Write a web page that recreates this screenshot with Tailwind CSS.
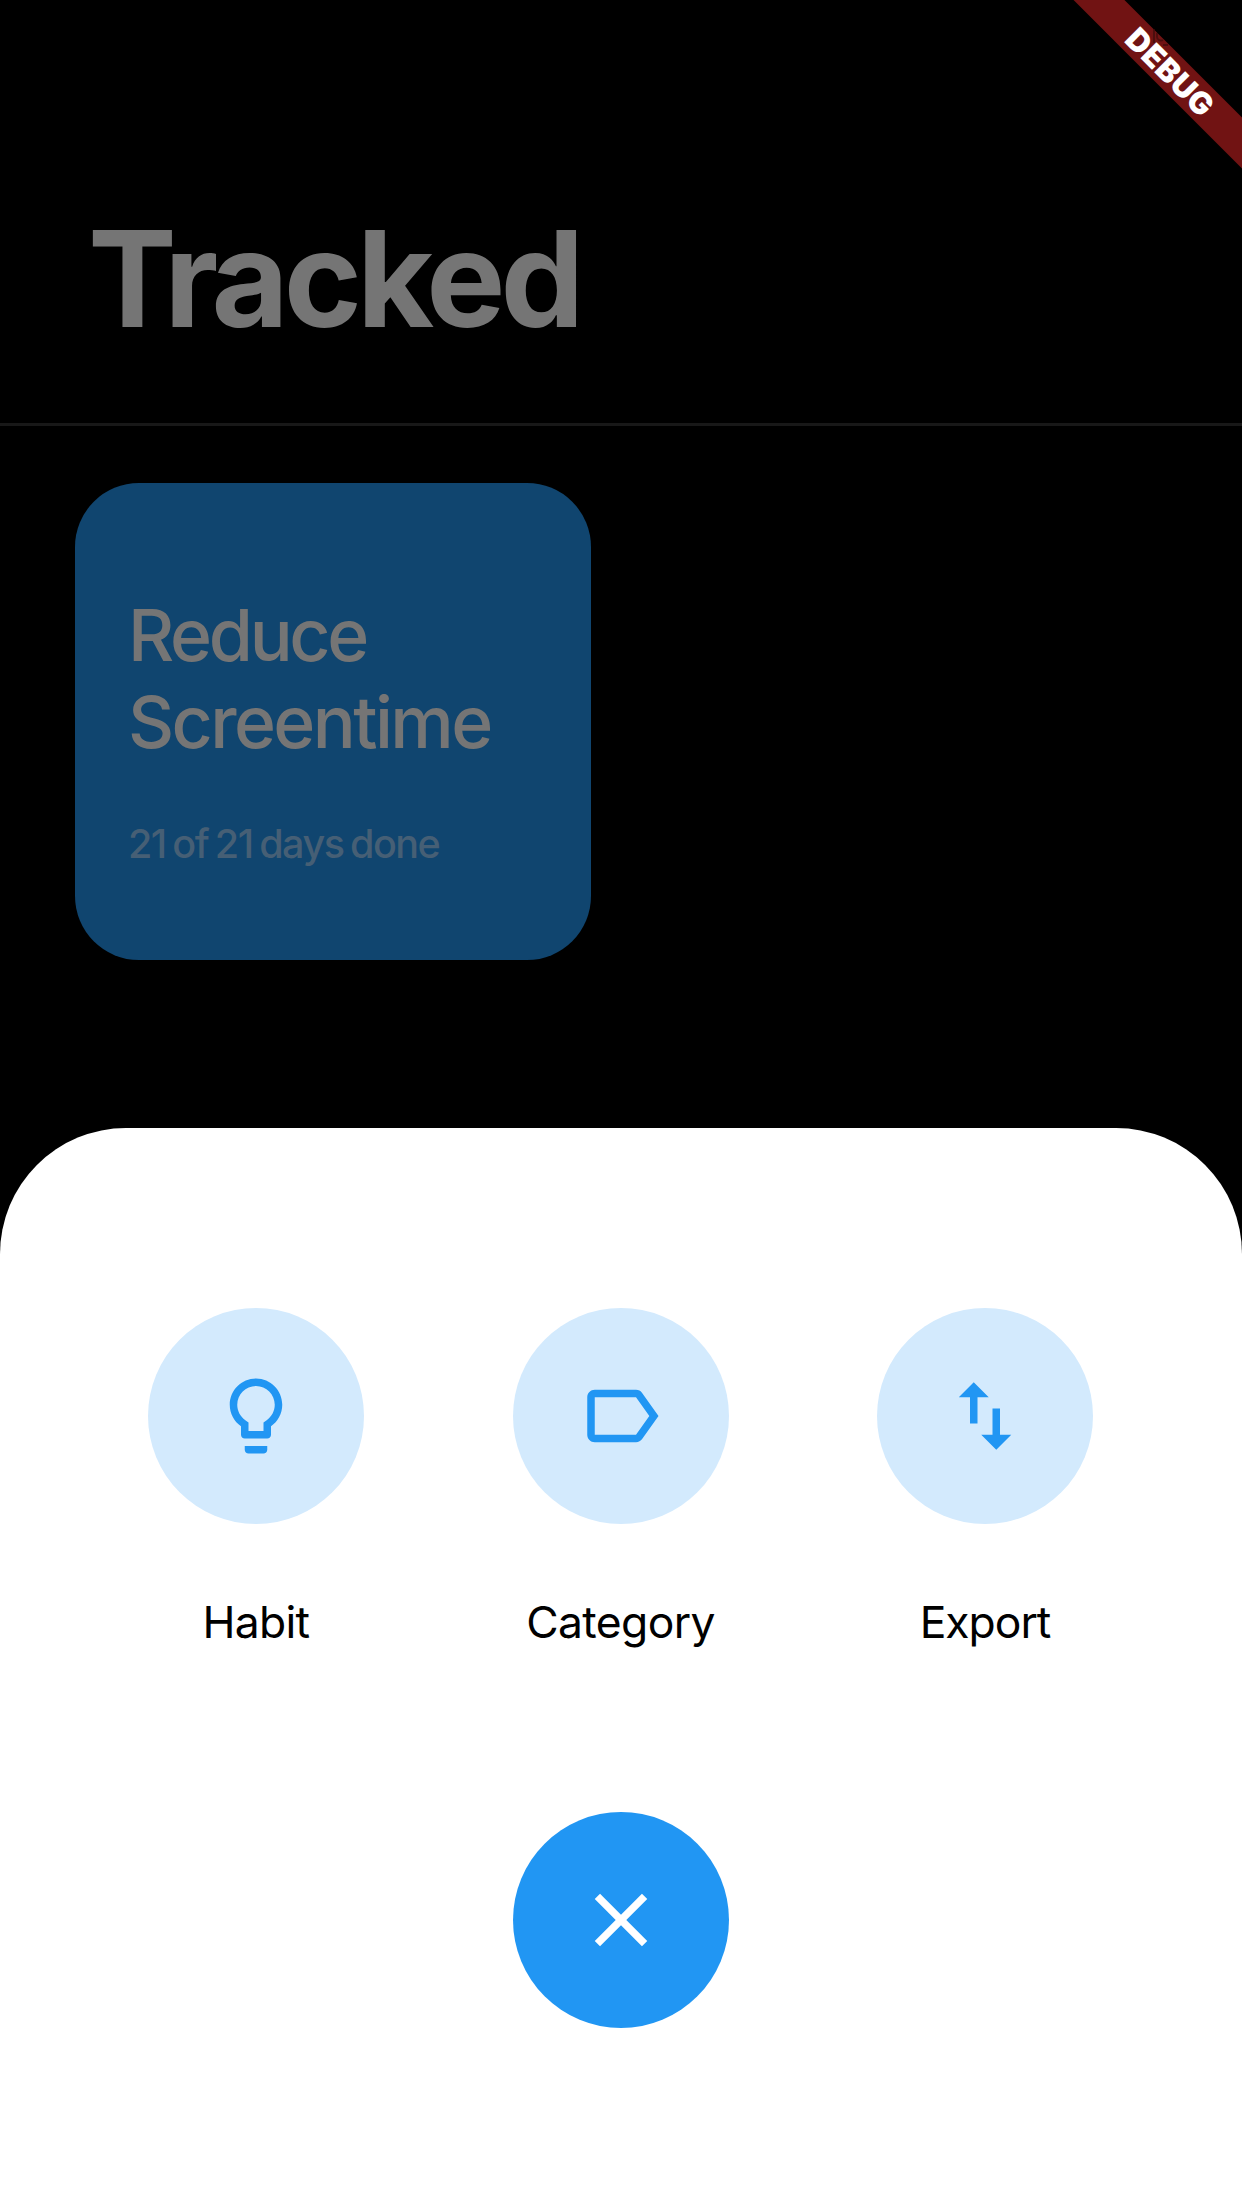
<!DOCTYPE html>
<html lang="en">
<head>
<meta charset="utf-8">
<title>Tracked</title>
<script src="https://cdn.jsdelivr.net/npm/@tailwindcss/browser@4"></script>
</head>
<body class="bg-black font-['Inter',sans-serif]">
<div class="relative flex h-[2208px] w-[1242px] flex-col overflow-hidden bg-black">
  <header class="flex h-[426px] shrink-0 flex-col border-b-3 border-[#181818] pt-[212px] pl-[88px]">
    <h1 class="text-[133px] leading-[134px] font-bold tracking-[-5px] text-[#757575]">Tracked</h1>
  </header>

  <main class="h-[702px] shrink-0 pt-[57px] pl-[75px]">
    <article class="flex h-[477px] w-[516px] flex-col rounded-[64px] bg-[#10456f] pt-[109px] pl-[53px]">
      <h2 class="text-[71.5px] leading-[87px] font-[450] text-[#757575]">
        <span class="block tracking-[-3.3px]">Reduce</span>
        <span class="block tracking-[-2.6px]">Screentime</span>
      </h2>
      <p class="mt-[54px] text-[39.5px] leading-[48px] font-[450] tracking-[-1.5px] whitespace-nowrap text-[#465f75] [word-spacing:-2.4px]">21 of 21 days done</p>
    </article>
  </main>

  <section class="flex flex-1 flex-col items-center rounded-t-[126px] bg-white pt-[180px]">
    <div class="flex w-[946px] justify-between pr-px">
      <div class="flex w-[216px] flex-col items-center">
        <button class="flex size-[216px] items-center justify-center rounded-full bg-[#d3eafd] text-[#2196f3]">
          <svg class="size-[90px]" viewBox="0 0 24 24" fill="currentColor"><path d="M9 21c0 .55.45 1 1 1h4c.55 0 1-.45 1-1v-1H9v1zm3-19C8.14 2 5 5.14 5 9c0 2.38 1.19 4.47 3 5.74V17c0 .55.45 1 1 1h6c.55 0 1-.45 1-1v-2.26c1.81-1.27 3-3.36 3-5.74 0-3.86-3.14-7-7-7zm2.85 11.1l-.85.6V16h-4v-2.3l-.85-.6C7.8 12.16 7 10.63 7 9c0-2.76 2.24-5 5-5s5 2.24 5 5c0 1.63-.8 3.16-2.15 4.1z"/></svg>
        </button>
        <span class="mt-[71px] text-[44.4px] leading-[54px] tracking-[-0.7px]">Habit</span>
      </div>
      <div class="flex w-[216px] flex-col items-center">
        <button class="flex size-[216px] items-center justify-center rounded-full bg-[#d3eafd] text-[#2196f3]">
          <svg class="size-[90px]" viewBox="0 0 24 24" fill="currentColor"><path d="M17.63 5.84C17.27 5.33 16.67 5 16 5L5 5.01C3.9 5.01 3 5.9 3 7v10c0 1.1.9 1.99 2 1.99L16 19c.67 0 1.27-.33 1.63-.84L22 12l-4.37-6.16zM16 17H5V7h11l3.55 5L16 17z"/></svg>
        </button>
        <span class="mt-[71px] text-[44.4px] leading-[54px] tracking-[-0.6px]">Category</span>
      </div>
      <div class="flex w-[216px] flex-col items-center">
        <button class="flex size-[216px] items-center justify-center rounded-full bg-[#d3eafd] text-[#2196f3]">
          <svg class="size-[90px]" viewBox="0 0 24 24" fill="currentColor"><path d="M9 3L5 6.99h3V14h2V6.99h3L9 3zm7 14.01V10h-2v7.01h-3L15 21l4-3.99h-3z"/></svg>
        </button>
        <span class="mt-[71px] text-[44.4px] leading-[54px] tracking-[-1px]">Export</span>
      </div>
    </div>
    <button class="mt-[163px] flex size-[216px] items-center justify-center rounded-full bg-[#2196f3] text-white">
      <svg class="size-[90px]" viewBox="0 0 24 24" fill="currentColor"><path d="M19 6.41L17.59 5 12 10.59 6.41 5 5 6.41 10.59 12 5 17.59 6.41 19 12 13.41 17.59 19 19 17.59 13.41 12z"/></svg>
    </button>
  </section>

  <!-- debug ribbon across the top right corner -->
  <div class="absolute top-[53px] left-[1019.5px] flex h-9 w-[300px] rotate-45 items-center justify-center bg-[#711313]">
    <span class="pl-0.5 text-[31px] leading-none font-black tracking-[0.5px] text-white">DEBUG</span>
  </div>
  <!-- corner of the toolbar glyph that shows over the ribbon -->
  <svg class="absolute top-[28px] left-[1152px] h-[20px] w-[20px]" viewBox="0 0 20 20" fill="none">
    <path d="M2 1v14M11 17h5M5 5v4a4 4 0 0 0 6 3" stroke="#3d0b0b" stroke-opacity=".7" stroke-width="2"/>
  </svg>
</div>
</body>
</html>
